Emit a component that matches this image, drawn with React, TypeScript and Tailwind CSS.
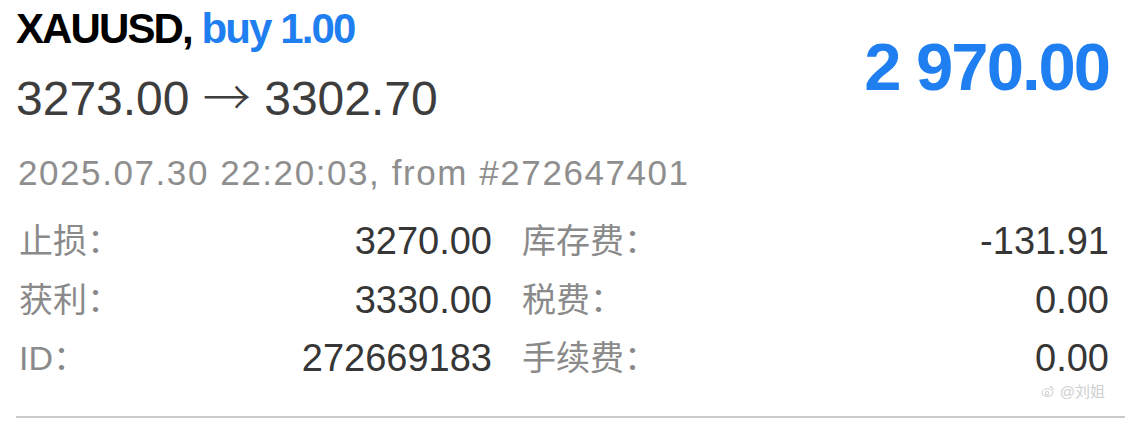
import React from 'react';

const rows = [
  { left: ['止损：', '3270.00'], right: ['库存费：', '-131.91'] },
  { left: ['获利：', '3330.00'], right: ['税费：', '0.00'] },
  { left: ['ID：', '272669183'], right: ['手续费：', '0.00'] },
];

const sans = 'font-["Liberation_Sans","Noto_Sans_CJK_SC",sans-serif]';

const App: React.FC = () => {
  return (
    <div className={`w-[1125px] h-[423px] bg-white overflow-hidden ${sans}`}>
      {/* Header: symbol, prices, profit */}
      <div className="flex items-center justify-between pl-[16px] pr-[16px] pt-[6px]">
        <div>
          <div className="text-[42px] leading-[46px] font-bold tracking-[-0.045em] text-black">
            XAUUSD, <span className="text-[#1f7ff0]">buy 1.00</span>
          </div>
          <div className="mt-[14px] text-[48px] leading-[56px] text-[#3d3d3d]">
            3273.00 <span className='font-["Noto_Sans_CJK_SC",sans-serif] font-light'>→</span> 3302.70
          </div>
        </div>
        <div className="text-[67px] leading-[76px] font-bold tracking-[-0.03em] text-[#1f7ff0]">2 970.00</div>
      </div>

      <div className="mt-[26px] pl-[18px] text-[35px] leading-[40px] tracking-[0.045em] text-[#8e8e8e]">
        2025.07.30 22:20:03, from #272647401
      </div>

      {/* Details */}
      <div className="mt-[19px] grid grid-cols-[473px_1fr] gap-x-[30px] pl-[19px] pr-[16px]">
        {rows.map((r, i) => (
          <React.Fragment key={i}>
            <div className="flex justify-between leading-[58.5px]">
              <span className="text-[34px] text-[#8a8a8a]">{r.left[0]}</span>
              <span className="text-[38px] text-[#363636]">{r.left[1]}</span>
            </div>
            <div className="flex justify-between leading-[58.5px]">
              <span className="text-[34px] text-[#8a8a8a]">{r.right[0]}</span>
              <span className="text-[38px] text-[#363636]">{r.right[1]}</span>
            </div>
          </React.Fragment>
        ))}
      </div>

      {/* watermark */}
      <div className="flex justify-end items-center gap-[6px] pr-[20px] h-[20px] -mt-[6px] text-[15px] leading-[20px] text-[#cfcfcf]">
        <svg width="13" height="13" viewBox="0 0 12 12" fill="none" stroke="#cfcfcf" strokeWidth="1">
          <ellipse cx="6" cy="7" rx="5" ry="3.5" />
          <circle cx="5.5" cy="7.5" r="1.5" />
          <path d="M8 1.5a3 3 0 0 1 3 3" />
        </svg>
        <span>@刘姐</span>
      </div>

      <div className="ml-[16px] mt-[14px] border-t-2 border-[#cacaca]" />
    </div>
  );
};

export default App;
